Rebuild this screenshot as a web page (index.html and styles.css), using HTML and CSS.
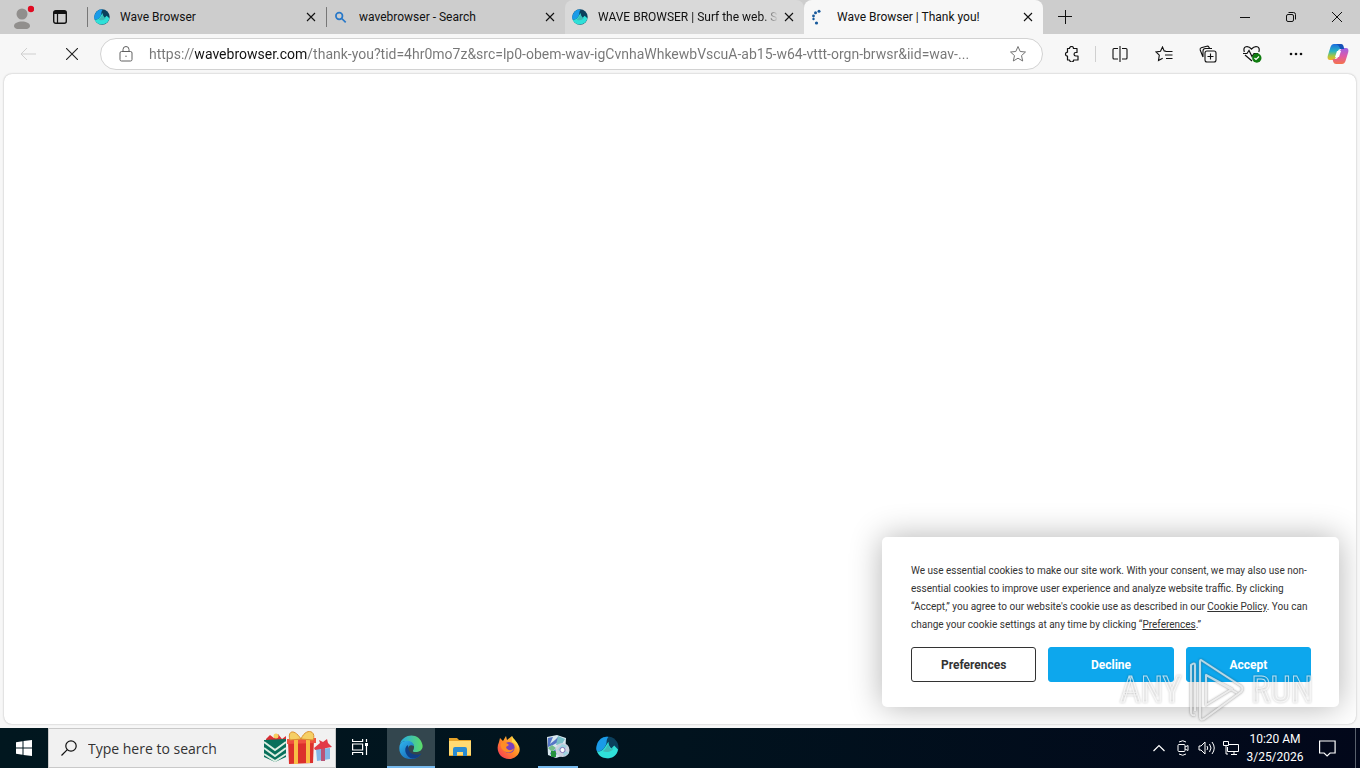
FILE: index.html
```html
<!DOCTYPE html>
<html lang="en">
<head>
    <meta charset="UTF-8">
    <meta name="viewport" content="width=device-width, initial-scale=1.0">
    <title>Wave Browser | Thank you!</title>
    <link rel="stylesheet" href="styles.css">
</head>
<body>
    <!-- Shared icons -->
    <svg class="sprite" aria-hidden="true">
        <defs>
            <linearGradient id="edgeBlue" x1="0" y1="0" x2="1" y2="1">
                <stop offset="0" stop-color="#2fb6ee"/>
                <stop offset="1" stop-color="#1254a8"/>
            </linearGradient>
            <linearGradient id="edgeGreen" x1="0" y1="0" x2="1" y2="0">
                <stop offset="0" stop-color="#25a9e8"/>
                <stop offset="1" stop-color="#5cdd67"/>
            </linearGradient>
            <linearGradient id="fire" x1="1" y1="0" x2="0" y2="1">
                <stop offset="0" stop-color="#ffe14a"/>
                <stop offset=".5" stop-color="#ff8a25"/>
                <stop offset="1" stop-color="#f52a62"/>
            </linearGradient>
            <linearGradient id="copilotLeft" x1="0" y1="0" x2="0" y2="1">
                <stop offset="0" stop-color="#1c6ce0"/>
                <stop offset=".45" stop-color="#28b5c2"/>
                <stop offset=".75" stop-color="#a7c840"/>
                <stop offset="1" stop-color="#f4b42b"/>
            </linearGradient>
            <linearGradient id="copilotRight" x1="0" y1="0" x2="0" y2="1">
                <stop offset="0" stop-color="#9a62e6"/>
                <stop offset=".5" stop-color="#df59a8"/>
                <stop offset="1" stop-color="#f4734b"/>
            </linearGradient>
        </defs>
        <symbol id="close" viewBox="0 0 10 10">
            <path d="M1 1l8 8M9 1L1 9" fill="none" stroke="currentColor" stroke-width="1.1"/>
        </symbol>
        <symbol id="wave" viewBox="0 0 24 24">
            <circle cx="12" cy="12" r="11.5" fill="#0b3f5c"/>
            <path d="M1 9C3 3 8 0 13 1c-3 3-1 6-3 9-2 4-4 6-9 6-1-2-1-4 0-7z" fill="#1a9be8"/>
            <path d="M1 16c7 1 8-5 12-10 0 3 1 5 3 7l3-3 4 4c-2 12-19 12-22 2z" fill="#2fe0d8"/>
            <path d="M7 16c3-2 4-5 6-8 0 3 1 4 3 6l2-2c0 4-6 6-11 4z" fill="#3fb8b4"/>
        </symbol>
    </svg>

    <!-- Tab strip -->
    <header class="tab-bar">
        <button class="icon-button profile" aria-label="Profile">
            <svg width="24" height="26" viewBox="0 0 24 26">
                <circle cx="12" cy="11" r="5.5" fill="#918f8d"/>
                <path d="M4 23c0-6 16-6 16 0 0 5-16 5-16 0z" fill="#918f8d"/>
                <circle cx="21" cy="6" r="3.2" fill="#e00b22"/>
            </svg>
        </button>
        <button class="icon-button workspace" aria-label="Tab actions">
            <svg width="14" height="14" viewBox="0 0 14 14"><rect x=".7" y=".7" width="12.6" height="12.6" rx="2" fill="none" stroke="#111" stroke-width="1.4"/><path d="M1 1h12v3H1z" fill="#111"/><path d="M4.5 4v9" stroke="#111" stroke-width="1.2"/></svg>
        </button>

        <nav class="tabs" aria-label="Tabs">
            <div class="tab divided">
                <svg class="favicon"><use href="#wave"/></svg>
                <a class="tab-title" href="#">Wave Browser</a>
                <button class="tab-close" aria-label="Close tab"><svg width="10" height="10"><use href="#close"/></svg></button>
            </div>
            <div class="tab divided">
                <svg class="favicon" viewBox="0 0 16 16" fill="none" stroke="#2878c8" stroke-width="1.7"><circle cx="6.2" cy="7" r="3.3"/><path d="M8.7 9.5l4 3.8"/></svg>
                <a class="tab-title" href="#">wavebrowser - Search</a>
                <button class="tab-close" aria-label="Close tab"><svg width="10" height="10"><use href="#close"/></svg></button>
            </div>
            <div class="tab hovered">
                <svg class="favicon"><use href="#wave"/></svg>
                <a class="tab-title" href="#">WAVE BROWSER | Surf the web. Save the ocean.</a>
                <button class="tab-close" aria-label="Close tab"><svg width="10" height="10"><use href="#close"/></svg></button>
            </div>
            <div class="tab active">
                <svg class="favicon" viewBox="0 0 16 16" fill="#185a9c"><circle cx="8" cy="2.2" r="1.5"/><circle cx="4.5" cy="3.8" r="1.5"/><circle cx="2.5" cy="7" r="1.4"/><circle cx="2.5" cy="10" r="1.2"/><circle cx="5.5" cy="14" r="1.6"/></svg>
                <a class="tab-title" href="#" aria-current="page">Wave Browser | Thank you!</a>
                <button class="tab-close" aria-label="Close tab"><svg width="10" height="10"><use href="#close"/></svg></button>
            </div>
        </nav>

        <button class="icon-button new-tab" aria-label="New tab">
            <svg width="14" height="14" viewBox="0 0 14 14"><path d="M7.5 0v14M0 6.5h14" stroke="#111"/></svg>
        </button>
        <div class="window-buttons">
            <button class="icon-button" aria-label="Minimize"><svg width="10" height="10" viewBox="0 0 10 10"><path d="M0 5.5h10" stroke="#111"/></svg></button>
            <button class="icon-button" aria-label="Restore"><svg width="10" height="10" viewBox="0 0 10 10" fill="none" stroke="#111"><rect x=".5" y="2.5" width="7" height="7" rx="1.5"/><path d="M2.5 .5h5a2 2 0 0 1 2 2v5"/></svg></button>
            <button class="icon-button" aria-label="Close"><svg width="10" height="10" viewBox="0 0 10 10"><path d="M0 0l10 10M10 0L0 10" stroke="#111"/></svg></button>
        </div>
    </header>

    <!-- Address bar -->
    <div class="toolbar">
        <button class="icon-button back" aria-label="Back" disabled>
            <svg width="16" height="14" viewBox="0 0 16 14"><path d="M16 7H1M7 1L1 7l6 6" fill="none" stroke="#cfcfcf"/></svg>
        </button>
        <button class="icon-button" aria-label="Stop">
            <svg width="12" height="12" viewBox="0 0 12 12"><path d="M0 0l12 12M12 0L0 12" stroke="#222" stroke-width="1.1"/></svg>
        </button>
        <div class="address">
            <button class="site-info" aria-label="View site information">
                <svg width="14" height="16" viewBox="0 0 14 16" fill="none" stroke="#606060"><rect x="1" y="5.5" width="12" height="9.5" rx="1.5"/><path d="M4 5.5V3.5a3 3 0 0 1 6 0v2"/><circle cx="7" cy="10.2" r=".7" fill="#606060" stroke="none"/></svg>
            </button>
            <input type="text" class="url" aria-label="Address" value="https://wavebrowser.com/thank-you?tid=4hr0mo7z&amp;src=lp0-obem-wav-igCvnhaWhkewbVscuA-ab15-w64-vttt-orgn-brwsr&amp;iid=wav-...">
            <button class="favorite" aria-label="Add to favorites">
                <svg width="18" height="18" viewBox="0 0 18 18"><path d="M9 1.5l2.2 5 5.3.5-4 3.6 1.2 5.4L9 13.2 4.3 16l1.2-5.4-4-3.6 5.3-.5z" fill="none" stroke="#737373" stroke-linejoin="round"/></svg>
            </button>
        </div>
        <div class="tools">
            <button class="icon-button" aria-label="Extensions">
                <svg width="16" height="16" viewBox="0 0 16 16"><path d="M3.5 2.5h2a2 2 0 0 1 4 0h3.5v4h-1.2a1.6 1.6 0 0 0 0 3.5H14v4H9.6a2 2 0 0 1-4 0H3.5V10.2a2 2 0 0 1 0-4z" fill="none" stroke="#111" stroke-width="1.2" stroke-linejoin="round"/></svg>
            </button>
            <span class="separator"></span>
            <button class="icon-button" aria-label="Split screen">
                <svg width="16" height="16" viewBox="0 0 16 16" fill="none" stroke="#111" stroke-width="1.1"><path d="M6 2.5H2q-1 0-1 1v8.5q0 1 1 1h4M10 2.5h4q1 0 1 1v8.5q0 1-1 1h-4M8 0v16"/></svg>
            </button>
            <button class="icon-button" aria-label="Favorites">
                <svg width="18" height="16" viewBox="0 0 18 16" fill="none" stroke="#111" stroke-width="1.1"><path d="M11 5.2l-1.8-.3L7.5 1 5.5 5.2 1 5.9l3.3 3.3-.8 5.2 4.2-2.2M10.5 5.5h7M10 9h7.5M11 12.5h6.5"/></svg>
            </button>
            <button class="icon-button" aria-label="Collections">
                <svg width="18" height="18" viewBox="0 0 18 18" fill="none" stroke="#111" stroke-width="1.1"><rect x="6" y="6" width="11" height="11" rx="2"/><path d="M11.5 8.5v6M8.5 11.5h6M4 12L1.2 5q-.5-1.7 1-2.3l5.6-1.5q1.5-.3 2.2 1l.5 1.3M4 12V6q0-2.5 2.5-2.5H13"/></svg>
            </button>
            <button class="icon-button" aria-label="Browser essentials">
                <svg width="20" height="18" viewBox="0 0 20 18" fill="none" stroke="#111" stroke-width="1.2"><path d="M2.3 7C.5 1 6 0 9.5 4 13 0 19 1 16.8 7M1 8.5h4l2-3 3 6 2-3h4M3 10l7 6"/><circle cx="14.8" cy="13" r="4.7" fill="#107c10" stroke="none"/><path d="M12.5 13l1.5 1.5 3-3" stroke="#fff"/></svg>
            </button>
            <button class="icon-button" aria-label="Settings and more">
                <svg width="14" height="4" viewBox="0 0 14 4" fill="#111"><circle cx="2" cy="2" r="1.3"/><circle cx="7" cy="2" r="1.3"/><circle cx="12" cy="2" r="1.3"/></svg>
            </button>
            <button class="icon-button copilot" aria-label="Copilot">
                <svg width="22" height="22" viewBox="0 0 22 22"><path d="M7 1h6q2 0 2.7 2l.8 3h-3q-2 0-2.6 2L8.5 15q-.7 2-2.8 2H3q-3 0-2.3-4L3.5 4Q4.5 1 7 1z" fill="url(#copilotLeft)"/><path d="M15 21H9q-2 0-2.7-2L5.5 16h3q2 0 2.6-2l2.4-7q.7-2 2.8-2H19q3 0 2.3 4l-2.8 9q-1 3-3.5 3z" fill="url(#copilotRight)"/><path d="M10 8h4l-2 6H8z" fill="#fff"/><path d="M9 1h5q2 0 2.5 2l.7 3h-4q-1-4-4.2-5z" fill="#1552b8"/></svg>
            </button>
        </div>
    </div>

    <!-- Web page -->
    <main class="page">
        <section class="cookie-banner" aria-label="Cookie consent">
            <p>We use essential cookies to make our site work. With your consent, we may also use non-essential cookies to improve user experience and analyze website traffic. By clicking “Accept,” you agree to our website's cookie use as described in our <a href="#">Cookie Policy</a>. You can change your cookie settings at any time by clicking “<a href="#">Preferences</a>.”</p>
            <div class="cookie-actions">
                <button class="cookie-button outline">Preferences</button>
                <button class="cookie-button">Decline</button>
                <button class="cookie-button">Accept</button>
            </div>
        </section>
        <div class="watermark">
            <span>ANY</span>
            <svg width="56" height="64" viewBox="0 0 56 64" fill="none" stroke-linejoin="round"><path d="M7 53V7q0-3-4 0v47q0 4 4 3M13 2l40 26q3 3 0 6L16 61q-4 2-4-2V4q0-2 1-2zM18 17v30l26-16zM18 17l31 18" stroke="#aaa" stroke-opacity=".25" stroke-width="3"/><path d="M7 53V7q0-3-4 0v47q0 4 4 3M13 2l40 26q3 3 0 6L16 61q-4 2-4-2V4q0-2 1-2zM18 17v30l26-16zM18 17l31 18" stroke="#fff" stroke-opacity=".65" stroke-width="2"/></svg>
            <span>RUN</span>
        </div>
    </main>

    <!-- Taskbar -->
    <footer class="taskbar">
        <button class="task start" aria-label="Start">
            <svg width="16" height="16" viewBox="0 0 16 16" fill="#fff"><path d="M0 2.2L6.5 1.3V7.5H0zM7.5 1.1L16 0v7.5H7.5zM0 8.5h6.5v6.2L0 13.8zM7.5 8.5H16V16l-8.5-1.1z"/></svg>
        </button>
        <label class="search">
            <svg width="16" height="16" viewBox="0 0 16 16" fill="none" stroke="#111" stroke-width="1.2"><circle cx="10" cy="6" r="5.2"/><path d="M6.3 9.7L.5 15.5"/></svg>
            <input type="text" placeholder="Type here to search" aria-label="Type here to search">
            <svg width="70" height="34" viewBox="0 0 70 34">
                <path d="M3 8l4-4 4 3 4-4 4 5 4-3v7H3z" fill="#d92d34"/><circle cx="13" cy="5" r="2.5" fill="#f6cf61"/>
                <path d="M1 9l22-1v18l-11 5-11-5z" fill="#08705b"/>
                <path d="M1 11l11 8 11-8M1 17l11 8 11-8M1 23l11 7 11-7" fill="none" stroke="#dceee2" stroke-width="2"/>
                <path d="M25 10l26-2-1 24-24 1z" fill="#dc302c"/><path d="M24 8l29-1v5l-29 1z" fill="#ef5140"/>
                <path d="M31 9h4v24h-4zM43 8h4v24h-4z" fill="#f8bd45"/>
                <path d="M38 8C31-3 24 0 27 9zM38 8C43-4 54 0 50 9z" fill="#f5cf65" stroke="#dc9130"/>
                <path d="M53 18l14-1v11l-13 2z" fill="#83b7e6"/><path d="M58 17h4v13h-4z" fill="#b85578"/>
                <path d="M51 17l6-5-1-3 4 2 4-3 1 4 4 4-17 3z" fill="#e23a49"/>
            </svg>
        </label>
        <nav class="apps" aria-label="Taskbar apps">
            <button class="task" aria-label="Task view">
                <svg width="16" height="16" viewBox="0 0 16 16" fill="none" stroke="#fff" stroke-width="1.2"><path d="M.6 0v2.5h10V0M.6 16v-2.5h10V16M.6 5h10v6H.6zM14.5 0v3M14.5 7v9"/><path d="M13 4h3v3h-3z" fill="#fff" stroke="none"/></svg>
            </button>
            <button class="task current" aria-label="Microsoft Edge">
                <svg width="24" height="24" viewBox="0 0 24 24"><path d="M1 9C4-2 21-3 23.5 10c.8 5-3 7-7 7-3 0-3-1-2-2.3C17 9 11 6 7 6 4 6 2 7.5 1 9z" fill="url(#edgeGreen)"/><path d="M.4 12C1 4 14 4 15 11 9 8 7 15 11 19c3 3 7 3 11 0C16 28-1 25 .4 12z" fill="url(#edgeBlue)"/><path d="M8.5 10c-5 4-1 13 5 13.5 4 0 7-2 9-5-6 3-12 0-13-4-.3-1.7 0-3-1-4.5z" fill="#103f86"/></svg>
            </button>
            <button class="task" aria-label="File Explorer">
                <svg width="22" height="20" viewBox="0 0 22 20"><path d="M0 1h8l2 2h12v16H0z" fill="#e6a329"/><path d="M0 4h22v14H0z" fill="#ffda72"/><path d="M4 19v-7q0-2 2-2h10q2 0 2 2v7h-4v-4H8v4z" fill="#298bd1"/></svg>
            </button>
            <button class="task" aria-label="Firefox">
                <svg width="24" height="24" viewBox="0 0 24 24"><path d="M2 7l1-4 3 3 3-5 1 4 5-4 1 4 4 3c7 8-1 16-8 16C3 24-2 15 2 7z" fill="url(#fire)"/><circle cx="12" cy="12.5" r="5.6" fill="#7941bd"/><path d="M4 8c4-1 6 0 8 2l-3 2c1 4 6 4 8 1-1 5-8 6-11 2-2-2-3-4-2-7z" fill="#ff8d25"/><path d="M15 1c2 4 7 6 6 13-1-4-3-6-6-7z" fill="#ffd744"/></svg>
            </button>
            <button class="task running" aria-label="Installer">
                <svg width="24" height="24" viewBox="0 0 24 24"><path d="M1 2l10-2 9 3-1 17-9 3-8-3z" fill="#d8e7ef"/><path d="M2 3l5-1-3 7 5-4 3-3 2 4-7 4-5 2zM4 18l6-4 1 5-5 3z" fill="#5576c6"/><path d="M12 1l7 3-3 5-6 1z" fill="#77bdc6"/><path d="M2 13l4-3 4 3-4 4z" fill="#75bd8c"/><path d="M5 16h5v6H5z" fill="#24913d"/><circle cx="16.5" cy="15" r="7" fill="#ccd1df"/><path d="M16 9l5 2-3 4 5 3-5 3-2-5-5-1z" fill="#9fd3e1"/><circle cx="16.5" cy="15" r="2.6" fill="#fff" stroke="#8475b8"/></svg>
            </button>
            <button class="task" aria-label="Wave Browser"><svg width="23" height="23"><use href="#wave"/></svg></button>
        </nav>
        <div class="tray">
            <button aria-label="Show hidden icons"><svg width="12" height="8" viewBox="0 0 12 8"><path d="M.5 7L6 1.5 11.5 7" fill="none" stroke="#fff" stroke-width="1.2"/></svg></button>
            <button aria-label="Meet now"><svg width="12" height="16" viewBox="0 0 12 16" fill="none" stroke="#fff"><rect x="1" y="4.5" width="7" height="7" rx="1"/><path d="M8 7l3-1.5v5L8 9M2 2q4-2.5 7 0M2 14q4 2.5 7 0"/></svg></button>
            <button aria-label="Volume"><svg width="18" height="14" viewBox="0 0 18 14" fill="none" stroke="#fff"><path d="M1 5h2l4-4v12L3 9H1zM9 5q1.5 2 0 4M11.5 3q3 4 0 8M14 1q4.5 6 0 12"/></svg></button>
            <button aria-label="Network"><svg width="16" height="14" viewBox="0 0 16 14" fill="none" stroke="#fff"><path d="M6 3.5h9.5v7h-11V6M8 13.5h6M11 10.5v3M.5.5h5v4h-5zM3 4.5v8.5h2"/></svg></button>
            <button class="clock"><time datetime="10:20">10:20 AM</time><time datetime="2026-03-25">3/25/2026</time></button>
            <button class="notifications" aria-label="Notifications"><svg width="17" height="17" viewBox="0 0 17 17"><path d="M.6 1h15.5v12h-5l-3 3-3-3H.6z" fill="none" stroke="#fff" stroke-width="1.2"/></svg></button>
            <button class="show-desktop" aria-label="Show desktop"></button>
        </div>
    </footer>
</body>
</html>
```

FILE: styles.css
```css
* {
    margin: 0;
    padding: 0;
    box-sizing: border-box;
}

body {
    display: flex;
    flex-direction: column;
    min-height: 100vh;
    background: #f7f7f7;
    color: #111;
    font-family: Roboto, "Open Sans", sans-serif;
    font-size: 12px;
}

button,
input {
    border: 0;
    background: none;
    color: inherit;
    font: inherit;
}

a {
    color: inherit;
}

.sprite {
    position: absolute;
    width: 0;
    height: 0;
}

.icon-button {
    display: flex;
    align-items: center;
    justify-content: center;
    width: 44px;
    height: 32px;
    flex-shrink: 0;
}

/* Tab strip */
.tab-bar {
    display: flex;
    align-items: center;
    height: 34px;
    background: #cdcdcd;
}

.workspace {
    width: 32px;
}

.profile svg {
    margin-top: -2px;
}

.tabs {
    display: flex;
    flex: 0 1 956px;
    align-self: stretch;
    min-width: 0;
    margin-left: 11px;
}

.tab {
    display: flex;
    flex: 1;
    align-items: center;
    min-width: 0;
    padding: 0 7px;
    border-radius: 8px 8px 0 0;
}

.tab.divided {
    background: linear-gradient(#777, #777) left center / 1px 20px no-repeat;
}

.tab.hovered {
    background: #d9d9d9;
}

.tab.active {
    background: #f7f7f7;
}

.favicon {
    width: 16px;
    height: 16px;
    flex-shrink: 0;
}

.tab-title {
    flex: 1;
    margin-left: 10px;
    overflow: hidden;
    white-space: nowrap;
    text-decoration: none;
}

.tab.hovered .tab-title {
    -webkit-mask-image: linear-gradient(to right, #000 165px, transparent 180px);
    mask-image: linear-gradient(to right, #000 165px, transparent 180px);
}

.tab-close {
    display: flex;
    align-items: center;
    justify-content: center;
    width: 16px;
    height: 20px;
    margin-left: 4px;
}

.window-buttons {
    display: flex;
    margin-left: auto;
}

.window-buttons .icon-button {
    width: 46px;
}

/* Address bar */
.toolbar {
    display: flex;
    align-items: center;
    height: 40px;
    padding: 0 0 0 6px;
}

.address {
    display: flex;
    align-items: center;
    flex: 1;
    height: 32px;
    min-width: 0;
    margin-left: 6px;
    padding: 0 15px 0 18px;
    border: 1px solid #d2d2d2;
    border-radius: 16px;
    background: #fff;
}

.site-info,
.favorite {
    display: flex;
    flex-shrink: 0;
}

.url {
    flex: 1;
    min-width: 0;
    height: 24px;
    margin: 0 10px 0 16px;
    font-size: 14px;
    outline: 0;
    color: transparent;
    caret-color: #111;
    /* the host part is darker than the rest of the address */
    background: linear-gradient(to right, #767676 46px, #111 46px, #111 158px, #767676 158px);
    -webkit-background-clip: text;
    background-clip: text;
}

.tools {
    display: flex;
    align-items: center;
    padding: 0 2px 0 7px;
}

.separator {
    width: 1px;
    height: 16px;
    margin: 0 2px 0 1px;
    background: #d0d0d0;
}

.copilot {
    width: 40px;
}

/* Web page */
.page {
    position: relative;
    flex: 1;
    margin: 0 4px 4px;
    overflow: hidden;
    border-radius: 8px;
    background: #fff;
    box-shadow: 0 0 2px rgba(0, 0, 0, 0.3);
}

.cookie-banner {
    position: absolute;
    right: 17px;
    bottom: 17px;
    width: 457px;
    padding: 25px 28px 25px 29px;
    border-radius: 5px;
    background: #fff;
    box-shadow: 0 0 32px rgba(0, 0, 0, 0.3);
    color: #333;
}

.cookie-banner p {
    margin-bottom: 13px;
    font-size: 10px;
    line-height: 18px;
}

.cookie-actions {
    display: flex;
    gap: 12px;
}

.cookie-button {
    flex: 1;
    height: 35px;
    border: 1px solid #0da7ed;
    border-radius: 3px;
    background: #0da7ed;
    color: #fff;
    font-size: 12px;
    font-weight: 700;
}

.cookie-button.outline {
    border-color: #333;
    background: #fff;
    color: #333;
}

.watermark {
    position: absolute;
    right: 43px;
    bottom: 2px;
    display: flex;
    align-items: center;
    gap: 7px;
    color: transparent;
    font-family: "Liberation Sans Narrow", "Roboto Condensed", Roboto, sans-serif;
    font-size: 36px;
    pointer-events: none;
    -webkit-text-stroke: 1px rgba(255, 255, 255, 0.7);
    filter: drop-shadow(0 0 1px rgba(0, 0, 0, 0.4));
}

/* Taskbar */
.taskbar {
    display: flex;
    height: 40px;
    background: linear-gradient(to right, #01171f, #01131e 50%, #02071a);
    color: #fff;
}

.task {
    display: flex;
    align-items: center;
    justify-content: center;
    width: 48px;
    height: 40px;
    border-bottom: 2px solid transparent;
}

.task.start {
    border-bottom: 0;
}

.task.current {
    background: #33464e;
    border-bottom-color: #76b9ed;
}

.task.running {
    background: linear-gradient(#76b9ed, #76b9ed) center bottom / 40px 2px no-repeat border-box;
}

.search {
    display: flex;
    align-items: center;
    width: 288px;
    padding: 0 2px 0 12px;
    border: 1px solid #c9c9c9;
    background: #f1f1f1;
}

.search input {
    flex: 1;
    min-width: 0;
    margin-left: 11px;
    color: #333;
    font-family: "Open Sans", "Noto Sans", sans-serif;
    font-size: 14px;
}

.search input::placeholder {
    color: #333;
}

.apps {
    display: flex;
    gap: 1px;
}

.apps .current {
    margin-left: 2px;
}

.tray {
    display: flex;
    align-items: center;
    margin-left: auto;
}

.tray button {
    display: flex;
    align-items: center;
    justify-content: center;
    width: 24px;
    height: 40px;
}

.tray .clock {
    flex-direction: column;
    width: 64px;
    line-height: 18px;
}

.tray .notifications {
    width: 40px;
}

.tray .show-desktop {
    width: 5px;
    margin-left: 8px;
    border-left: 1px solid #59606c;
}
```
